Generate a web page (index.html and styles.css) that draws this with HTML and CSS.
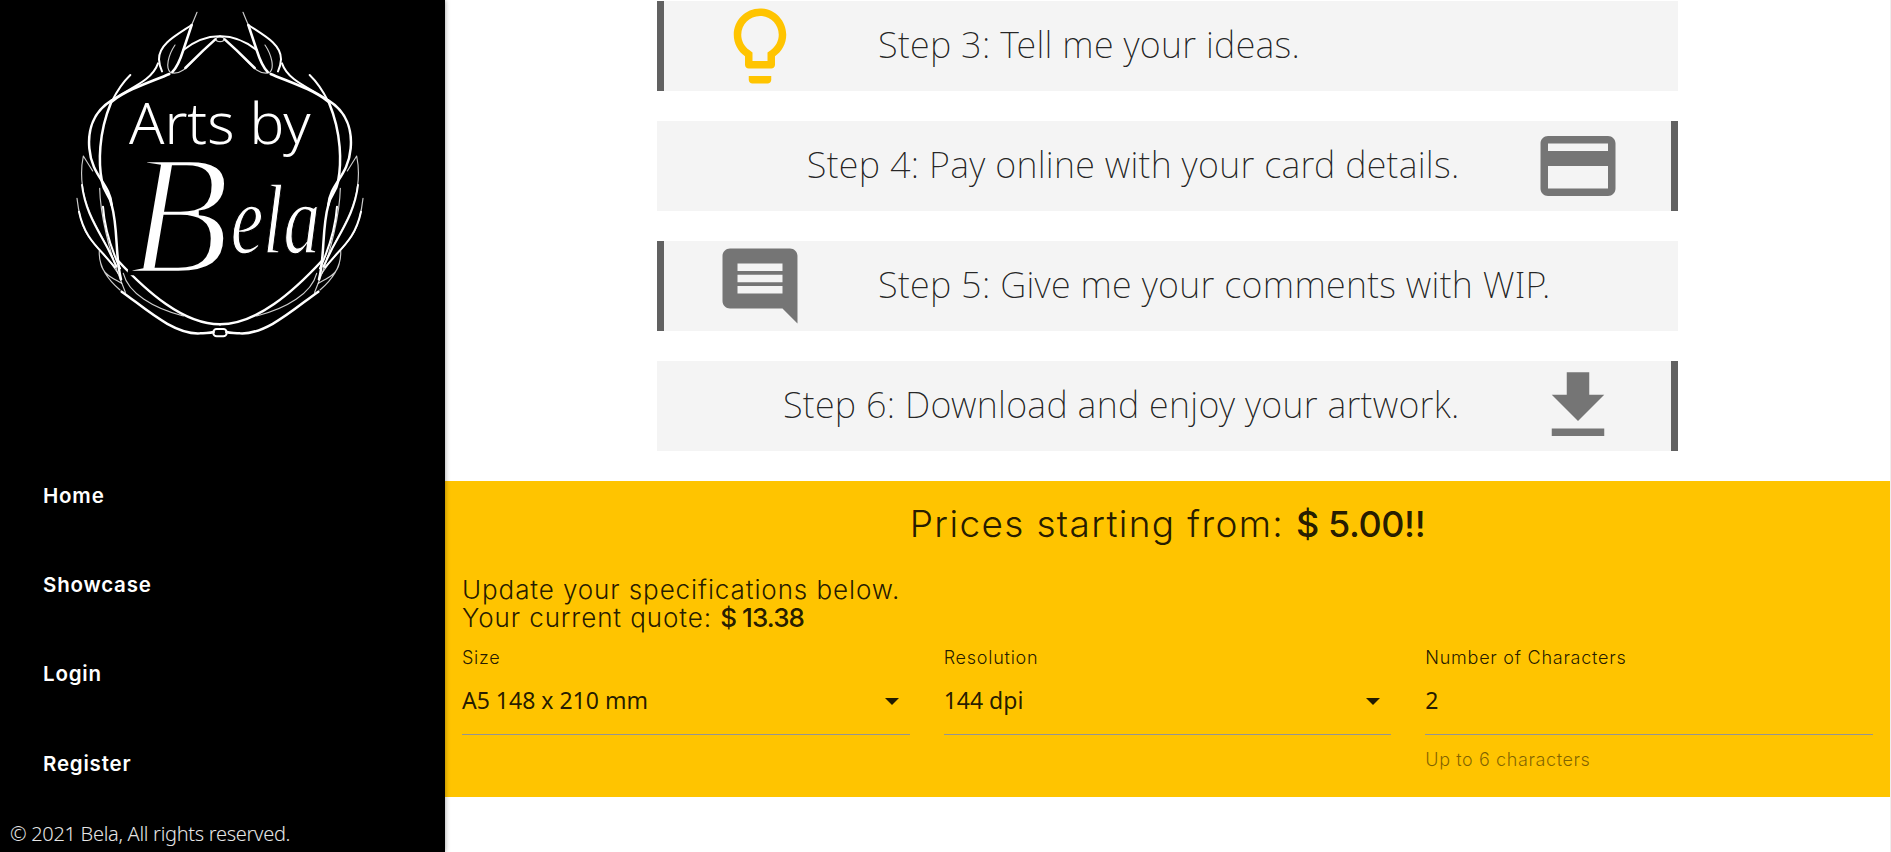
FILE: index.html
```
<!DOCTYPE html>
<html lang="en">
<head>
<meta charset="utf-8">
<title>Arts by Bela</title>
<link rel="stylesheet" href="styles.css">
</head>
<body>
<div class="layout">
  <aside class="sidebar">
    <svg class="logo" viewBox="0 0 960 1050" role="img" aria-label="Arts by Bela">
      <defs>
        <g id="wreath-half">
          <path class="thick" d="M395 75L370 150C358 188 348 205 337 216"/>
          <path class="thin" d="M411 37C404 55 400 62 395 75"/>
          <path class="mid" d="M395 75C350 105 296 132 297 178C298 195 302 206 306 214"/>
          <path class="thin" d="M345 135C325 165 315 205 332 218C368 228 394 185 430 151"/>
          <path class="thick" d="M376 204L430 151L466 118"/>
          <path class="mid" d="M370 150C400 127 440 108 480 109"/>
          <path class="mid" d="M294 190C275 245 205 265 155 301"/>
          <path class="thick" d="M328 222C275 245 205 266 155 305"/>
          <path class="mid" d="M211 225C185 250 170 275 155 305"/>
          <path class="thick" d="M155 301C100 335 83 390 88 445C95 530 150 550 155 615C175 685 165 770 183 838"/>
          <path class="thick" d="M153 308C115 400 115 490 126 545C132 580 150 585 155 615"/>
          <path class="thin" d="M98 513L70 468C55 540 72 610 110 680L160 775"/>
          <path class="thin" d="M51 595C62 690 85 715 130 762C155 788 165 805 174 820"/>
          <path class="mid" d="M57 635C70 695 95 725 130 762L165 802"/>
          <path class="mid" d="M66 555C75 630 105 675 143 745L170 800"/>
          <path class="thin" d="M119 565C121 650 150 755 172 815L196 877"/>
          <path class="mid" d="M129 620C134 690 155 750 180 805"/>
          <path class="thin" d="M118 752C115 800 145 840 180 870M122 790C130 825 160 835 185 850"/>
          <path class="thick" d="M172 780C260 875 370 973 480 973"/>
          <path class="thin" d="M190 820C205 880 280 925 370 948"/>
          <path class="thick" d="M185 875C250 920 340 1005 420 1000C440 998 450 1000 461 996"/>
        </g>
      </defs>
      <use href="#wreath-half"/>
      <use href="#wreath-half" transform="translate(960 0) scale(-1 1)"/>
      <ellipse class="thin" cx="480" cy="118" rx="12" ry="7"/>
      <rect class="mid" x="460" y="987" width="40" height="22" rx="10"/>
      <text class="logo-top" x="207" y="431" textLength="545" lengthAdjust="spacingAndGlyphs">Arts by</text>
      <text class="logo-initial" x="205" y="818" textLength="305" lengthAdjust="spacingAndGlyphs">B</text>
      <text class="logo-rest" x="512" y="758" textLength="268" lengthAdjust="spacingAndGlyphs">ela</text>
    </svg>
    <nav class="nav">
      <a class="nav-link">Home</a>
      <a class="nav-link">Showcase</a>
      <a class="nav-link">Login</a>
      <a class="nav-link">Register</a>
    </nav>
    <p class="copyright">© 2021 Bela, All rights reserved.</p>
  </aside>
  <main class="content">
    <section class="steps">
      <div class="step step-left">
        <svg class="icon icon-accent" viewBox="0 0 24 24"><path d="M9 21c0 .55.45 1 1 1h4c.55 0 1-.45 1-1v-1H9v1zm3-19C8.14 2 5 5.14 5 9c0 2.38 1.19 4.47 3 5.74V17c0 .55.45 1 1 1h6c.55 0 1-.45 1-1v-2.26c1.81-1.27 3-3.36 3-5.74 0-3.86-3.14-7-7-7zm2.85 11.1l-.85.6V16h-4v-2.3l-.85-.6C7.8 12.16 7 10.63 7 9c0-2.76 2.24-5 5-5s5 2.24 5 5c0 1.63-.8 3.16-2.15 4.1z"/></svg>
        <span class="step-text">Step 3: Tell me your ideas.</span>
      </div>
      <div class="step step-right">
        <span class="step-text">Step 4: Pay online with your card details.</span>
        <svg class="icon" viewBox="0 0 24 24"><path d="M20 4H4c-1.11 0-1.99.89-1.99 2L2 18c0 1.11.89 2 2 2h16c1.11 0 2-.89 2-2V6c0-1.11-.89-2-2-2zm0 14H4v-6h16v6zm0-10H4V6h16v2z"/></svg>
      </div>
      <div class="step step-left">
        <svg class="icon" viewBox="0 0 24 24"><path d="M21.99 4c0-1.1-.89-2-1.99-2H4c-1.1 0-2 .9-2 2v12c0 1.1.9 2 2 2h14l4 4-.01-18zM18 14H6v-2h12v2zm0-3H6V9h12v2zm0-3H6V6h12v2z"/></svg>
        <span class="step-text">Step 5: Give me your comments with WIP.</span>
      </div>
      <div class="step step-right">
        <span class="step-text">Step 6: Download and enjoy your artwork.</span>
        <svg class="icon" viewBox="0 0 24 24"><path d="M19 9h-4V3H9v6H5l7 7 7-7zM5 18v2h14v-2H5z"/></svg>
      </div>
    </section>
    <section class="quote">
      <h2 class="price">Prices starting from: <b class="price-value">$ 5.00!!</b></h2>
      <p class="summary">Update your specifications below.<br>Your current quote: <b class="summary-value">$ 13.38</b></p>
      <div class="fields">
        <div class="field">
          <span class="label">Size</span>
          <div class="control">A5 148 x 210 mm<i class="caret"></i></div>
        </div>
        <div class="field">
          <span class="label">Resolution</span>
          <div class="control">144 dpi<i class="caret"></i></div>
        </div>
        <div class="field">
          <span class="label">Number of Characters</span>
          <div class="control">2</div>
          <span class="hint">Up to 6 characters</span>
        </div>
      </div>
    </section>
  </main>
</div>
</body>
</html>
```
FILE: styles.css
```
* { box-sizing: border-box; }

body {
  margin: 0;
  background: #fff;
  color: rgba(0, 0, 0, .87);
  font-family: Inter, "Open Sans", sans-serif;
}

.layout {
  display: flex;
  height: 852px;
  overflow: hidden;
}

/* Sidebar */
.sidebar {
  display: flex;
  flex-direction: column;
  width: 445px;
  flex: none;
  background: #000;
  color: #fff;
  box-shadow: 0 0 5px rgba(0, 0, 0, .4);
  z-index: 1;
}

.logo {
  width: 320px;
  height: 350px;
  margin-left: 60px;
}

.thin, .mid, .thick {
  fill: none;
  stroke: #fff;
  stroke-linecap: round;
  stroke-linejoin: round;
}
.thin { stroke-width: 3.5; opacity: .8; }
.mid { stroke-width: 6; }
.thick { stroke-width: 7.5; }

.logo-top {
  font: 300 172px "Noto Sans", sans-serif;
  fill: #fff;
}
.logo-initial {
  font: italic 515px "Liberation Serif", serif;
  fill: #fff;
  stroke: #000;
  stroke-width: 14px;
}
.logo-rest {
  font: italic 300px "Liberation Serif", serif;
  fill: #fff;
  stroke: #000;
  stroke-width: 4px;
}

.nav {
  display: flex;
  flex-direction: column;
  padding: 101px 0 0 43px;
}
.nav-link {
  height: 89.2px;
  line-height: 90px;
  font-size: 20.5px;
  font-weight: 600;
  letter-spacing: .8px;
}

.copyright {
  margin: 12px 0 0 10px;
  font: 300 20px/28px "Noto Sans", sans-serif;
  letter-spacing: -.3px;
  color: #e6e6e6;
}

/* Steps */
.content {
  width: 1446px;
  border-right: 1px solid #eee;
}

.steps {
  display: flex;
  flex-direction: column;
  gap: 30px;
  width: 1021px;
  margin: 1px 0 30px 212px;
}

.step {
  display: flex;
  align-items: center;
  height: 90px;
  background: #f4f4f4;
}
.step-left {
  padding-left: 51px;
  border-left: 7px solid #616161;
  gap: 73px;
}
.step-right {
  justify-content: flex-end;
  padding-right: 48.5px;
  border-right: 7px solid #616161;
  gap: 73px;
}

.step-text {
  padding-bottom: 2px;
  font: 200 36px/88px "Noto Sans", sans-serif;
  letter-spacing: .3px;
  white-space: nowrap;
}

.icon {
  width: 90px;
  height: 90px;
  fill: #757575;
}
.icon-accent { fill: #ffc400; }

/* Quote */
.quote {
  height: 316px;
  padding: 21px 17px 0;
  background: #ffc400;
}

.price {
  margin: 0;
  text-align: center;
  font-size: 37px;
  line-height: 44px;
  font-weight: 300;
  letter-spacing: 1.35px;
}
.price-value {
  font-size: 36px;
  font-weight: 500;
  letter-spacing: -.4px;
}

.summary {
  margin: 30px 0 0;
  font-size: 26px;
  line-height: 28px;
  font-weight: 300;
  letter-spacing: .9px;
}
.summary-value {
  font-weight: 500;
  letter-spacing: -.9px;
}

.fields {
  display: grid;
  grid-template-columns: repeat(3, 1fr);
  gap: 34px;
  margin-top: 15px;
}
.field {
  display: flex;
  flex-direction: column;
}
.label {
  font-size: 18px;
  line-height: 22px;
  font-weight: 300;
  letter-spacing: .75px;
}
.control {
  display: flex;
  align-items: center;
  justify-content: space-between;
  height: 66px;
  padding: 0 11px 3px 0;
  border-bottom: 1px solid #949494;
  font-family: "Noto Sans", sans-serif;
  font-size: 23px;
}
.caret {
  margin-top: 2px;
  border: 7.5px solid transparent;
  border-top-color: rgba(0, 0, 0, .87);
  border-bottom: 0;
}
.hint {
  margin-top: 14px;
  font-size: 18px;
  line-height: 22px;
  font-weight: 300;
  letter-spacing: .6px;
  color: rgba(0, 0, 0, .5);
}
```
